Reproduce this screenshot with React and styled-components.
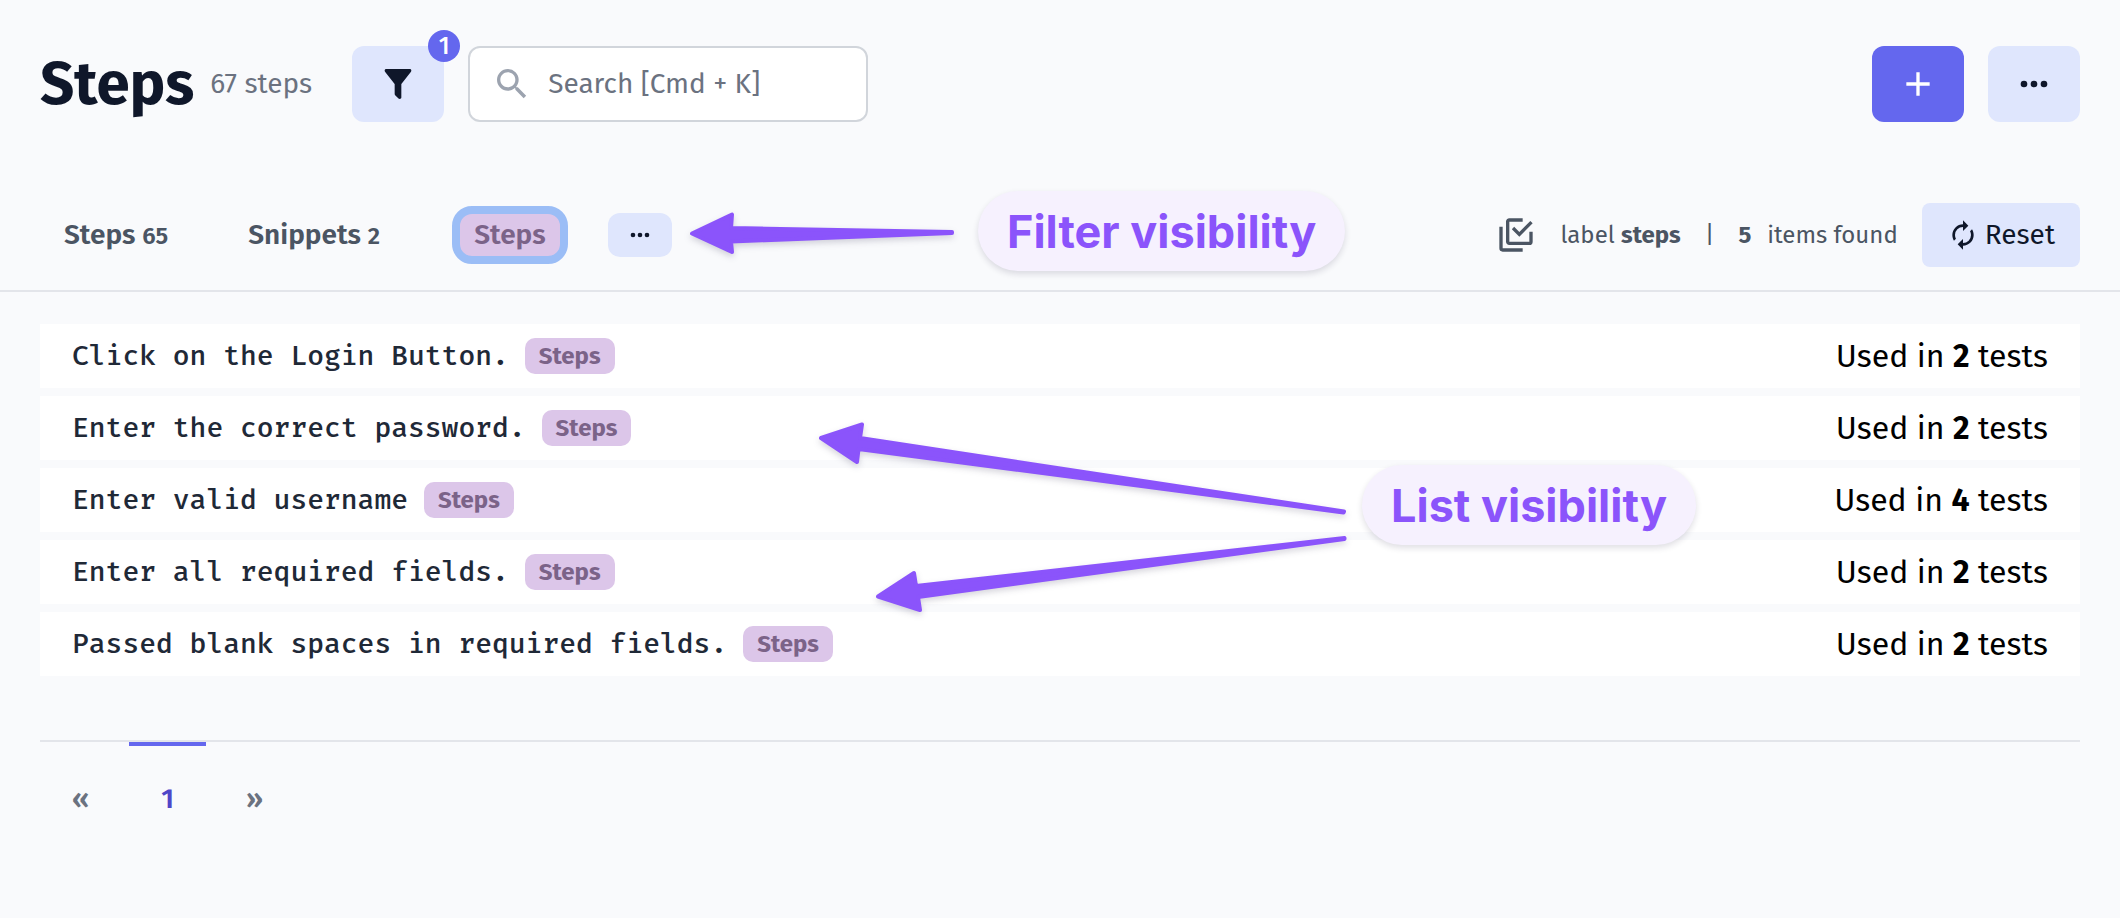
import React from "react";
import styled, { createGlobalStyle, css } from "styled-components";

const color = {
  page: "#f9fafc",
  ink: "#0f172a",
  body: "#1f2937",
  muted: "#6b7280",
  slate: "#4b5563",
  line: "#e3e5ea",
  soft: "#dfe6fd",
  primary: "#6467ee",
  tag: "#dcc6e9",
  tagInk: "#7b6388",
  ring: "#9bbdf6",
  note: "#8b54fb",
  noteSoft: "#f6f1fe",
};

const GlobalStyle = createGlobalStyle`
  * { box-sizing: border-box; }
  body {
    margin: 0;
    min-height: 100vh;
    background: ${color.page};
    color: #000;
    font-family: "Fira Sans", "Noto Sans", sans-serif;
    font-size: 28px;
    line-height: 32px;
  }
  button, input { font: inherit; color: inherit; }
`;

const paths = {
  filter:
    "M14,12V19.88C14.04,20.18 13.94,20.5 13.71,20.71C13.32,21.1 12.69,21.1 12.3,20.71L10.29,18.7C10.06,18.47 9.96,18.16 10,17.87V12H9.97L4.21,4.62C3.87,4.19 3.95,3.56 4.38,3.22C4.57,3.08 4.78,3 5,3H19C19.22,3 19.43,3.08 19.62,3.22C20.05,3.56 20.13,4.19 19.79,4.62L14.03,12H14Z",
  search:
    "M9.5,3A6.5,6.5 0 0,1 16,9.5C16,11.11 15.41,12.59 14.44,13.73L14.71,14H15.5L20.5,19L19,20.5L14,15.5V14.71L13.73,14.44C12.59,15.41 11.11,16 9.5,16A6.5,6.5 0 0,1 3,9.5A6.5,6.5 0 0,1 9.5,3M9.5,5C7,5 5,7 5,9.5C5,12 7,14 9.5,14C12,14 14,12 14,9.5C14,7 12,5 9.5,5Z",
  plus: "M19,13H13V19H11V13H5V11H11V5H13V11H19V13Z",
  dots: "M16,12A2,2 0 0,1 18,10A2,2 0 0,1 20,12A2,2 0 0,1 18,14A2,2 0 0,1 16,12M10,12A2,2 0 0,1 12,10A2,2 0 0,1 14,12A2,2 0 0,1 12,14A2,2 0 0,1 10,12M4,12A2,2 0 0,1 6,10A2,2 0 0,1 8,12A2,2 0 0,1 6,14A2,2 0 0,1 4,12Z",
  renew:
    "M12,6V9L16,5L12,1V4A8,8 0 0,0 4,12C4,13.57 4.46,15.03 5.24,16.26L6.7,14.8C6.25,13.97 6,13 6,12A6,6 0 0,1 12,6M18.76,7.74L17.3,9.2C17.74,10.04 18,11 18,12A6,6 0 0,1 12,18V15L8,19L12,23V20A8,8 0 0,0 20,12C20,10.43 19.54,8.97 18.76,7.74Z",
  selectAll:
    "M20,16V10H22V16A2,2 0 0,1 20,18H8C6.89,18 6,17.1 6,16V4C6,2.89 6.89,2 8,2H16V4H8V16H20M10.91,7.08L14,10.17L20.59,3.58L22,5L14,13L9.5,8.5L10.91,7.08M16,20V22H4A2,2 0 0,1 2,20V7H4V20H16Z",
};

const Svg = styled.svg`
  display: block;
  flex: none;
  width: ${(p) => p.$size}px;
  height: ${(p) => p.$size}px;
  fill: currentColor;
`;

function Icon({ name, size = 40 }) {
  return (
    <Svg $size={size} viewBox="0 0 24 24" aria-hidden="true">
      <path d={paths[name]} />
    </Svg>
  );
}

const Header = styled.header`
  display: flex;
  align-items: center;
  justify-content: space-between;
  padding: 46px 40px 0;
`;

const Cluster = styled.div`
  display: flex;
  align-items: center;
  gap: ${(p) => p.$gap}px;
`;

const Title = styled.h1`
  margin: 0;
  color: ${color.ink};
  font-size: 60px;
  font-weight: 700;
  line-height: 72px;
`;

const Total = styled.span`
  margin-right: 16px;
  color: ${color.muted};
`;

const Button = styled.button`
  position: relative;
  display: flex;
  align-items: center;
  justify-content: center;
  width: 92px;
  height: 76px;
  padding: 0;
  border: 0;
  border-radius: 12px;
  cursor: pointer;
  color: ${color.ink};
  background: ${color.soft};
  ${(p) =>
    p.$primary &&
    css`
      color: #fff;
      background: ${color.primary};
    `}
  ${(p) =>
    p.$small &&
    css`
      width: 64px;
      height: 44px;
    `}
`;

const ResetButton = styled(Button)`
  gap: 6px;
  width: auto;
  height: 64px;
  padding: 0 25px;
  border-radius: 8px;
`;

const Badge = styled.span`
  position: absolute;
  top: -16px;
  right: -16px;
  width: 32px;
  height: 32px;
  border-radius: 50%;
  color: #fff;
  background: ${color.primary};
  font-size: 24px;
  font-weight: 500;
  text-align: center;
`;

const SearchBox = styled.label`
  display: flex;
  align-items: center;
  gap: 16px;
  width: 400px;
  height: 76px;
  padding: 0 22px;
  border: 2px solid #d1d5db;
  border-radius: 12px;
  color: #9ca3af;
  background: #fff;
`;

const SearchInput = styled.input`
  flex: 1;
  min-width: 0;
  padding: 0;
  border: 0;
  outline: 0;
  color: ${color.body};
  background: none;
  &::placeholder {
    color: ${color.muted};
    opacity: 1;
  }
`;

const FilterBar = styled.section`
  position: relative;
  display: flex;
  align-items: center;
  justify-content: space-between;
  margin-top: 81px;
  padding: 0 40px 23px;
  border-bottom: 2px solid ${color.line};
`;

const Tabs = styled.nav`
  display: flex;
  gap: 80px;
  padding: 0 32px 0 24px;
`;

const Tab = styled.a`
  color: ${color.slate};
  font-weight: 600;
  text-decoration: none;
`;

const TabCount = styled.span`
  font-size: 24px;
`;

const Tag = styled.span`
  padding: 0 14px;
  border-radius: 10px;
  color: ${color.tagInk};
  background: ${color.tag};
  font-size: 24px;
  font-weight: 700;
  line-height: 36px;
`;

const ActiveTag = styled.button`
  height: 58px;
  padding: 0 14px;
  border: 8px solid ${color.ring};
  border-radius: 20px;
  color: ${color.tagInk};
  background: ${color.tag};
  font-weight: 600;
  cursor: pointer;
`;

const Summary = styled.div`
  display: flex;
  align-items: center;
  gap: 24px;
  color: ${color.slate};
  font-size: 24px;
`;

const Found = styled.span`
  display: flex;
  gap: 16px;
`;

const ListArea = styled.main`
  position: relative;
  padding: 32px 40px 0;
`;

const List = styled.ul`
  display: flex;
  flex-direction: column;
  gap: 8px;
  margin: 0;
  padding: 0;
  list-style: none;
`;

const Row = styled.li`
  display: flex;
  align-items: center;
  justify-content: space-between;
  height: 64px;
  padding: 0 32px;
  background: #fff;
`;

const StepText = styled.span`
  color: ${color.body};
  font-family: "Fira Mono", "DejaVu Sans Mono", monospace;
  font-size: 28px;
  font-weight: 500;
`;

const Usage = styled.span`
  font-size: 32px;
`;

const Pagination = styled.nav`
  display: flex;
  gap: 8px;
  margin: 64px 40px 0;
  border-top: 2px solid ${color.line};
`;

const PageLink = styled.a`
  padding: 37px 32px 32px;
  border-top: 4px solid ${(p) => (p.$current ? color.primary : "transparent")};
  color: ${(p) => (p.$current ? "#4f46c8" : color.muted)};
  font-weight: 600;
  text-decoration: none;
`;

/* Callouts float over the page content they explain. */
const Callout = styled.div`
  position: absolute;
  top: ${(p) => p.$top}px;
  left: ${(p) => p.$left}px;
  padding: 9px 29px 7px;
  border-radius: 40px;
  color: ${color.note};
  background: ${color.noteSoft};
  box-shadow: 0 3px 6px rgba(30, 20, 60, 0.14);
  font-family: Inter, sans-serif;
  font-size: 45px;
  font-weight: 700;
  line-height: 64px;
  white-space: nowrap;
`;

const Arrows = styled.svg`
  position: absolute;
  top: ${(p) => p.$top}px;
  left: ${(p) => p.$left}px;
  overflow: visible;
  pointer-events: none;
  fill: ${color.note};
  stroke: ${color.note};
  stroke-width: 4;
  stroke-linejoin: round;
  filter: drop-shadow(0 3px 3px rgba(30, 20, 60, 0.18));
`;

const steps = [
  { text: "Click on the Login Button.", used: 2 },
  { text: "Enter the correct password.", used: 2 },
  { text: "Enter valid username", used: 4 },
  { text: "Enter all required fields.", used: 2 },
  { text: "Passed blank spaces in required fields.", used: 2 },
];

export default function App() {
  return (
    <>
      <GlobalStyle />
      <Header>
        <Cluster $gap={24}>
          <Cluster $gap={16}>
            <Title>Steps</Title>
            <Total>67 steps</Total>
          </Cluster>
          <Button type="button" aria-label="Filter">
            <Icon name="filter" />
            <Badge>1</Badge>
          </Button>
          <SearchBox>
            <Icon name="search" />
            <SearchInput type="text" aria-label="Search" placeholder="Search [Cmd + K]" />
          </SearchBox>
        </Cluster>
        <Cluster $gap={24}>
          <Button type="button" $primary aria-label="Add step">
            <Icon name="plus" />
          </Button>
          <Button type="button" aria-label="More actions">
            <Icon name="dots" />
          </Button>
        </Cluster>
      </Header>

      <FilterBar>
        <Cluster $gap={40}>
          <Tabs>
            <Tab href="#steps">
              Steps <TabCount>65</TabCount>
            </Tab>
            <Tab href="#snippets">
              Snippets <TabCount>2</TabCount>
            </Tab>
          </Tabs>
          <ActiveTag type="button">Steps</ActiveTag>
          <Button type="button" $small aria-label="More labels">
            <Icon name="dots" size={28} />
          </Button>
        </Cluster>
        <Cluster $gap={24}>
          <Summary>
            <Icon name="selectAll" />
            <span>
              label <b>steps</b>
            </span>
            <span>|</span>
            <Found>
              <b>5</b>
              <span>items found</span>
            </Found>
          </Summary>
          <ResetButton type="button">
            <Icon name="renew" size={32} />
            Reset
          </ResetButton>
        </Cluster>
        <Arrows $top={9} $left={690} width="264" height="42" aria-hidden="true">
          <path d="M2,21.5L42,2.5L41,16L262,20V21L41,29.5L42,40Z" />
        </Arrows>
        <Callout $top={-12} $left={978}>
          Filter visibility
        </Callout>
      </FilterBar>

      <ListArea>
        <List>
          {steps.map((step) => (
            <Row key={step.text}>
              <Cluster $gap={16}>
                <StepText>{step.text}</StepText>
                <Tag>Steps</Tag>
              </Cluster>
              <Usage>
                Used in <b>{step.used}</b> tests
              </Usage>
            </Row>
          ))}
        </List>
        <Arrows $top={130} $left={819} width="528" height="191" aria-hidden="true">
          <path d="M2,16L43,2.5L41,16L525,89.5L524.5,90.5L39.5,27L38,40Z" />
          <path d="M59,174.5L95,151L97,164L525.5,116L525.5,117L99,175L101,188Z" />
        </Arrows>
        <Callout $top={173} $left={1362}>
          List visibility
        </Callout>
      </ListArea>

      <Pagination aria-label="Pagination">
        <PageLink href="#previous">«</PageLink>
        <PageLink href="#page-1" $current aria-current="page">
          1
        </PageLink>
        <PageLink href="#next">»</PageLink>
      </Pagination>
    </>
  );
}
